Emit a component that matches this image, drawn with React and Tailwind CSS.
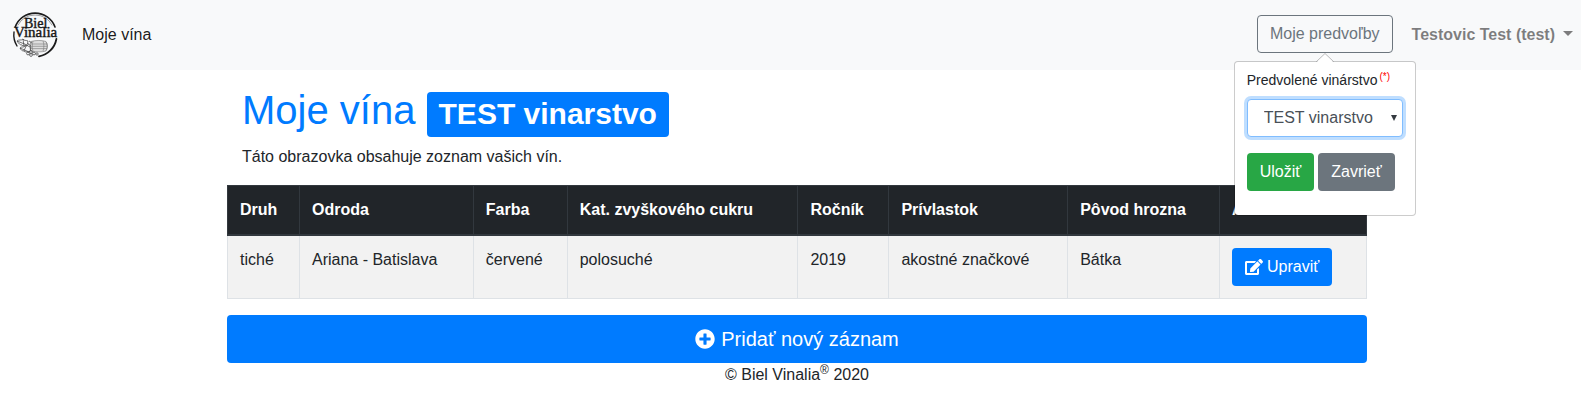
import { useState } from 'react';
import { FaEdit, FaPlusCircle } from 'react-icons/fa';

const columns = [
  { label: 'Druh', width: 'w-[72px]' },
  { label: 'Odroda', width: 'w-[174px]' },
  { label: 'Farba', width: 'w-[94px]' },
  { label: 'Kat. zvyškového cukru', width: 'w-[231px]' },
  { label: 'Ročník', width: 'w-[91px]' },
  { label: 'Prívlastok', width: 'w-[179px]' },
  { label: 'Pôvod hrozna', width: 'w-[152px]' },
  { label: 'Akcie', width: 'w-[147px]' },
];

const wines = [
  {
    id: 1,
    values: ['tiché', 'Ariana - Batislava', 'červené', 'polosuché', '2019', 'akostné značkové', 'Bátka'],
  },
];

function Logo() {
  return (
    <svg className="h-[46px] w-[46px]" viewBox="0 0 46 46" fill="none" role="img" aria-label="Biel Vinalia">
      <g stroke="#1c1c1c" strokeLinecap="round">
        <path d="M3.2 15A21.2 21.2 0 0 1 43 15" strokeWidth="1.6" />
        <path d="M2 20A21.4 21.4 0 0 0 5 34" strokeWidth="1.4" />
        <path d="M44.4 27A21.6 21.6 0 0 1 27 44.4" strokeWidth="1.8" />
        <path d="M6 13A19.5 19.5 0 0 1 40 13" strokeWidth="0.4" />
      </g>
      <g fontFamily="'Liberation Serif', serif" fill="#161616" stroke="#161616" strokeWidth="0.4">
        <text x="12" y="16" fontSize="14">
          Biel
        </text>
        <text x="2" y="25" fontSize="15">
          Vinalia
        </text>
      </g>
      {/* barrel */}
      <g stroke="#777" strokeWidth="0.6">
        <path d="M19 29.5c5-1.4 11-1.4 15 0 1.6 3 1.6 6.5 0 9.5-4 1.2-10 1.2-15 0-1.5-3-1.5-6.5 0-9.5z" fill="#dedede" />
        <path d="M21 29.2c-1 3-1 7 0 10M31 29c1.2 3 1.2 7 0 10M18 32h17M18 34.3h17M18 36.6h17" />
        <path d="M34 30c2 2 2 6 0 8.5" />
      </g>
      {/* grapes and leaves */}
      <g stroke="#3a3a3a" strokeWidth="0.7">
        <path d="M5 29c2-2 4 0 6-2 1 2 3 1 5 2-1 2 1 3-1 5-2-1-4 1-5-1-2 0-3-1-5-4z" />
        <path d="M5 29l10 4M11 27l1 7M8 36c2-2 3 0 5-2s3 1 6 1c-1 2 0 4-2 5-2-1-4 1-5-1-2 0-3-1-4-3z" />
        <path d="M8 36l9 4M14 34l-2 5M17 29l3 2M15 31l4 3" />
        <circle cx="16" cy="41.5" r="1.4" />
        <circle cx="19" cy="40" r="1.4" />
        <circle cx="22" cy="41.5" r="1.4" />
        <circle cx="19" cy="43" r="1.4" />
        <circle cx="25" cy="42" r="1.2" />
      </g>
    </svg>
  );
}

function PreferencesPopover({ onClose }) {
  return (
    <form
      className="absolute top-full left-1/2 z-10 mt-2 w-[182px] -translate-x-1/2 rounded border border-black/20 bg-white bg-clip-padding px-3 pt-2 pb-6"
      onSubmit={(e) => e.preventDefault()}
    >
      <svg className="absolute -top-[9px] left-1/2 h-[10px] w-[18px] -translate-x-1/2" viewBox="0 0 18 10" aria-hidden="true">
        <path d="M0 10L9 1l9 9z" fill="#fff" />
        <path d="M0.5 8.5L9 0.5l8.5 8" fill="none" stroke="#000" strokeOpacity="0.25" />
      </svg>
      <label htmlFor="winery" className="mb-2 block text-sm leading-[21px] whitespace-nowrap">
        Predvolené vinárstvo
        <sup className="ml-0.5 text-[10px] text-[#ff0000]">(*)</sup>
      </label>
      <div className="relative">
        <select
          id="winery"
          className="block h-[38px] w-full appearance-none rounded border border-[#80bdff] bg-white px-4 text-base text-[#495057] ring-3 ring-[#007bff]/25 outline-none"
        >
          <option>TEST vinarstvo</option>
        </select>
        <svg className="pointer-events-none absolute top-4 right-1.5 h-1.5 w-1.5" viewBox="0 0 6 6" aria-hidden="true">
          <path d="M0 0h6L3 6z" fill="#343a40" />
        </svg>
      </div>
      <div className="mt-4 flex gap-1">
        <button type="submit" className="h-[38px] rounded bg-[#28a745] px-[13px] text-base text-white">
          Uložiť
        </button>
        <button type="button" className="h-[38px] rounded bg-[#6c757d] px-[13px] text-base text-white" onClick={onClose}>
          Zavrieť
        </button>
      </div>
    </form>
  );
}

function Navbar() {
  const [isOpen, setIsOpen] = useState(true);

  return (
    <header className="flex h-[70px] items-center bg-[#f8f9fa] pr-2 pl-3">
      <a href="#" className="mr-6">
        <Logo />
      </a>
      <nav className="flex-1">
        <a href="#" className="text-black/90">
          Moje vína
        </a>
      </nav>
      <div className="relative mr-[19px] mb-0.5">
        <button
          type="button"
          className="block h-[38px] rounded border border-[#6c757d] px-3 text-[#6c757d]"
          aria-expanded={isOpen}
          onClick={() => setIsOpen((prev) => !prev)}
        >
          Moje predvoľby
        </button>
        {isOpen && <PreferencesPopover onClose={() => setIsOpen(false)} />}
      </div>
      <button type="button" className="flex items-center gap-2 font-bold text-black/50">
        Testovic Test (test)
        <span className="mb-1 border-x-5 border-t-5 border-x-transparent border-t-current" />
      </button>
    </header>
  );
}

export default function App() {
  return (
    <div className="bg-white font-['Liberation_Sans',Arial,sans-serif] text-base text-[#212529]">
      <Navbar />
      <div className="pt-4 pl-[13px]">
        <main className="mx-auto max-w-[1140px]">
          <div className="px-[15px]">
            <h1 className="mb-2 text-[40px] leading-[48px] text-[#007bff]">
              Moje vína{' '}
              <span className="inline-block rounded bg-[#007bff] px-3 pt-[7px] pb-2 align-baseline text-[30px] leading-[30px] font-bold text-white">
                TEST vinarstvo
              </span>
            </h1>
            <p className="mb-4">Táto obrazovka obsahuje zoznam vašich vín.</p>
          </div>

          <table className="mb-4 w-full border-collapse border border-[#dee2e6] text-left">
            <thead className="bg-[#212529] text-white">
              <tr>
                {columns.map(({ label, width }) => (
                  <th key={label} className={`border border-b-2 border-[#32383e] p-3 ${width}`}>
                    {label}
                  </th>
                ))}
              </tr>
            </thead>
            <tbody>
              {wines.map((wine) => (
                <tr key={wine.id} className="bg-[#f2f2f2] align-top">
                  {wine.values.map((value) => (
                    <td key={value} className="border border-[#dee2e6] p-3">
                      {value}
                    </td>
                  ))}
                  <td className="border border-[#dee2e6] p-3">
                    <button type="button" className="flex h-[38px] items-center gap-1 rounded bg-[#007bff] px-[13px] text-white">
                      <FaEdit className="h-4 w-[18px]" />
                      Upraviť
                    </button>
                  </td>
                </tr>
              ))}
            </tbody>
          </table>

          <button
            type="button"
            className="flex h-12 w-full items-center justify-center gap-1.5 rounded bg-[#007bff] text-xl text-white"
          >
            <FaPlusCircle />
            Pridať nový záznam
          </button>
        </main>
        <footer className="text-center">
          © Biel Vinalia<sup className="text-xs">®</sup> 2020
        </footer>
      </div>
    </div>
  );
}
